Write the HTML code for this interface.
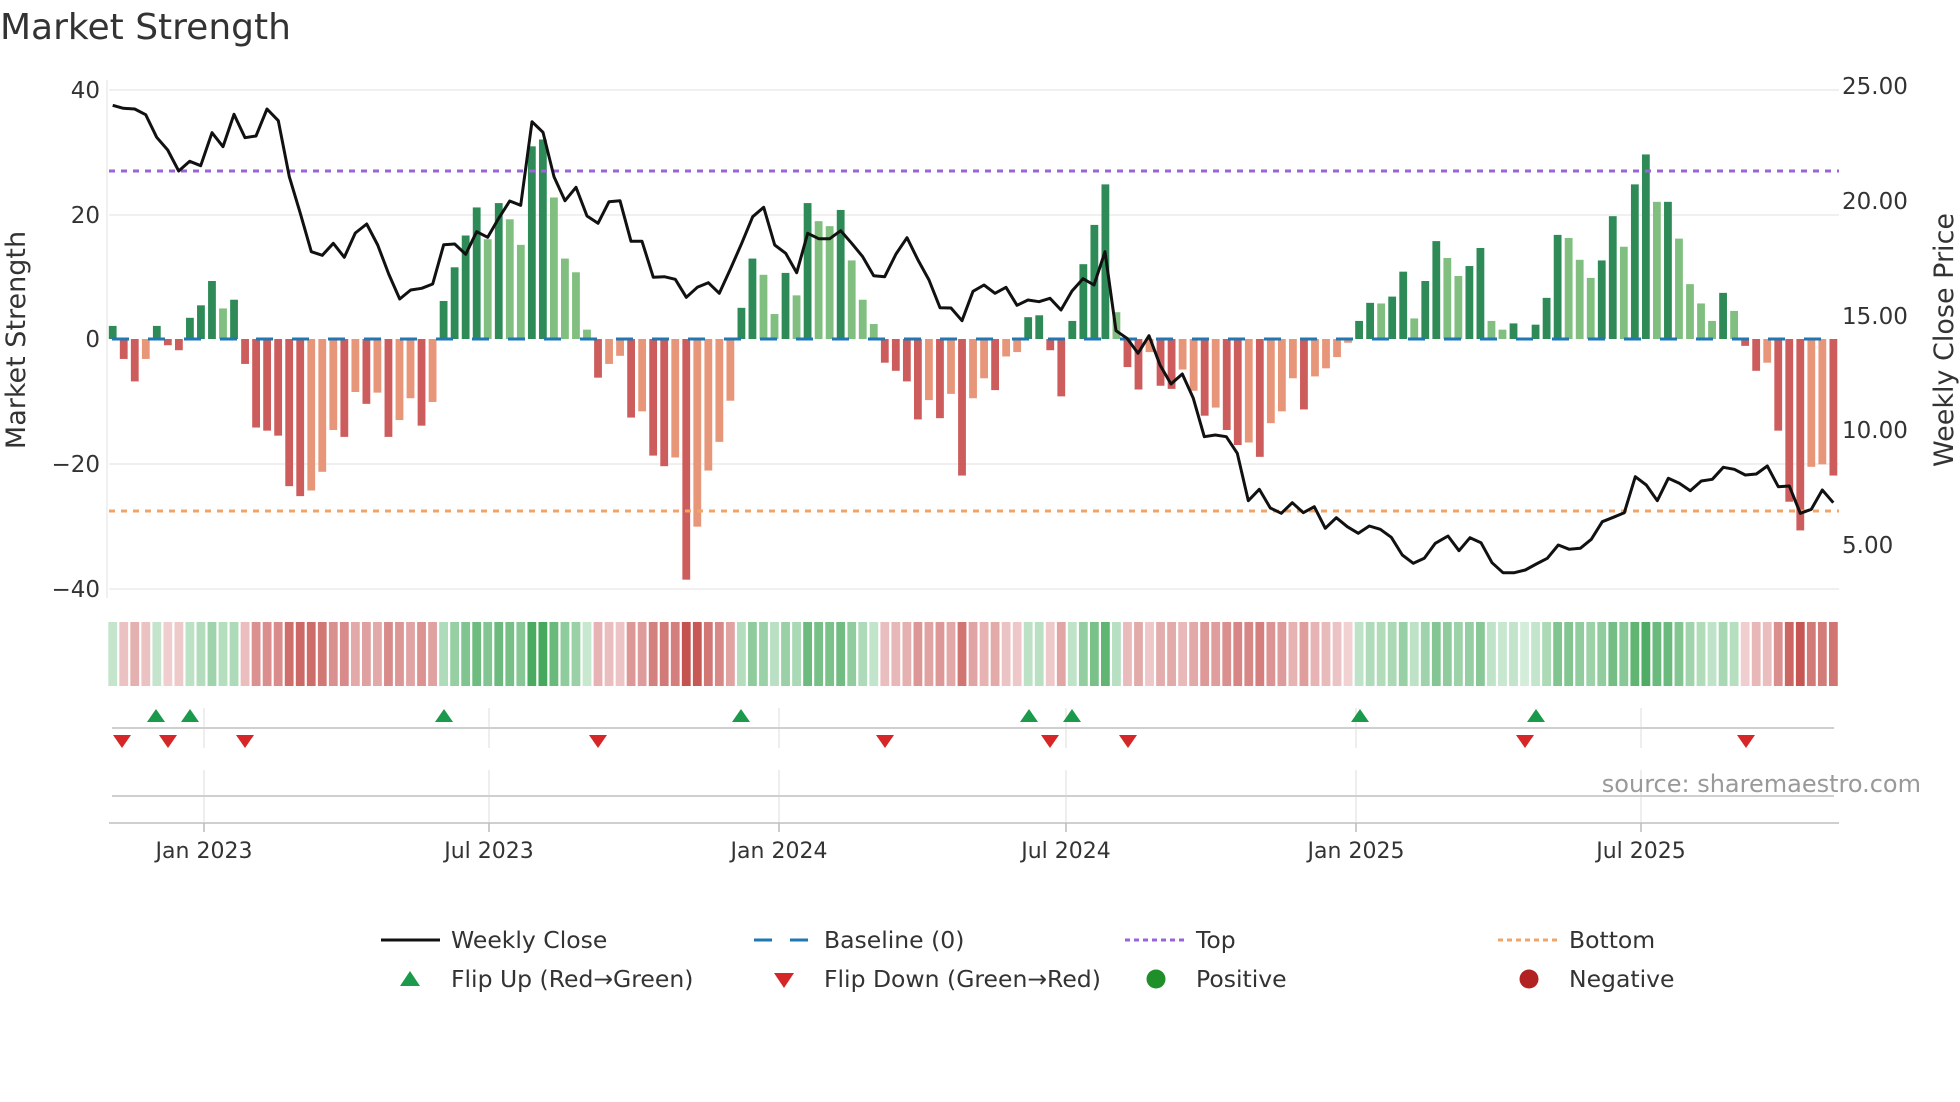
<!DOCTYPE html>
<html><head><meta charset="utf-8"><style>
html,body{margin:0;padding:0;background:#fff;}
svg{display:block;}
text{font-family:"DejaVu Sans","Liberation Sans",sans-serif;fill:#333;}
</style></head><body>
<svg id="s" width="1960" height="1102" viewBox="0 0 1960 1102" xmlns="http://www.w3.org/2000/svg">
<text x="0" y="39" font-size="36">Market Strength</text>
<g stroke="#ececec" stroke-width="1.5">
<line x1="109" y1="90" x2="1839" y2="90"/>
<line x1="109" y1="215" x2="1839" y2="215"/>
<line x1="109" y1="464" x2="1839" y2="464"/>
<line x1="109" y1="589" x2="1839" y2="589"/>
<line x1="107" y1="80" x2="107" y2="598"/>
</g>
<g font-size="23" text-anchor="end">
<text x="100" y="98">40</text>
<text x="100" y="223">20</text>
<text x="100" y="347">0</text>
<text x="100" y="472">−20</text>
<text x="100" y="597">−40</text>
</g>
<g font-size="23">
<text x="1842" y="94">25.00</text>
<text x="1842" y="209">20.00</text>
<text x="1842" y="324">15.00</text>
<text x="1842" y="438">10.00</text>
<text x="1842" y="553">5.00</text>
</g>
<text font-size="27" text-anchor="middle" transform="translate(25,340) rotate(-90)">Market Strength</text>
<text font-size="27" text-anchor="middle" transform="translate(1953,340) rotate(-90)">Weekly Close Price</text>
<g id="bars"></g>
<line x1="112" y1="339" x2="1839" y2="339" stroke="#1f77b4" stroke-width="3" stroke-dasharray="17 19"/>
<line x1="109" y1="171" x2="1839" y2="171" stroke="#9b63d8" stroke-width="3" stroke-dasharray="6 6"/>
<line x1="109" y1="511" x2="1839" y2="511" stroke="#f0a468" stroke-width="3" stroke-dasharray="6 6"/>
<polyline id="pl" fill="none" stroke="#111" stroke-width="3" stroke-linejoin="round" points=""/>
<g id="heat"></g>
<g stroke="#e8e8e8" stroke-width="1.5">
<line x1="204" y1="708" x2="204" y2="748"/><line x1="489" y1="708" x2="489" y2="748"/><line x1="779" y1="708" x2="779" y2="748"/><line x1="1066" y1="708" x2="1066" y2="748"/><line x1="1356" y1="708" x2="1356" y2="748"/><line x1="1641" y1="708" x2="1641" y2="748"/>
<line x1="204" y1="770" x2="204" y2="823"/><line x1="489" y1="770" x2="489" y2="823"/><line x1="779" y1="770" x2="779" y2="823"/><line x1="1066" y1="770" x2="1066" y2="823"/><line x1="1356" y1="770" x2="1356" y2="823"/><line x1="1641" y1="770" x2="1641" y2="823"/>
</g>
<line x1="112" y1="728" x2="1834" y2="728" stroke="#cfcfcf" stroke-width="2"/>
<line x1="112" y1="796" x2="1834" y2="796" stroke="#cfcfcf" stroke-width="2"/>
<line x1="109" y1="823" x2="1839" y2="823" stroke="#cfcfcf" stroke-width="2"/>
<g stroke="#bbb" stroke-width="1.5">
<line x1="204" y1="823" x2="204" y2="832"/><line x1="489" y1="823" x2="489" y2="832"/><line x1="779" y1="823" x2="779" y2="832"/><line x1="1066" y1="823" x2="1066" y2="832"/><line x1="1356" y1="823" x2="1356" y2="832"/><line x1="1641" y1="823" x2="1641" y2="832"/>
</g>
<g id="mk"></g>
<g font-size="22" text-anchor="middle">
<text x="204" y="858">Jan 2023</text>
<text x="489" y="858">Jul 2023</text>
<text x="779" y="858">Jan 2024</text>
<text x="1066" y="858">Jul 2024</text>
<text x="1356" y="858">Jan 2025</text>
<text x="1641" y="858">Jul 2025</text>
</g>
<text x="1921" y="792" font-size="24" text-anchor="end" style="fill:#999">source: sharemaestro.com</text>
<g font-size="23.5">
<line x1="381" y1="940" x2="440" y2="940" stroke="#111" stroke-width="3"/>
<text x="451" y="948">Weekly Close</text>
<line x1="754" y1="940" x2="772" y2="940" stroke="#1f77b4" stroke-width="3"/>
<line x1="790" y1="940" x2="808" y2="940" stroke="#1f77b4" stroke-width="3"/>
<text x="824" y="948">Baseline (0)</text>
<line x1="1125" y1="940" x2="1185" y2="940" stroke="#9b63d8" stroke-width="3" stroke-dasharray="5 4"/>
<text x="1196" y="948">Top</text>
<line x1="1498" y1="940" x2="1558" y2="940" stroke="#f0a468" stroke-width="3" stroke-dasharray="5 4"/>
<text x="1569" y="948">Bottom</text>
<polygon points="400,986 420,986 410,971" fill="#1a9a4a"/>
<text x="451" y="987">Flip Up (Red→Green)</text>
<polygon points="774,973 794,973 784,988" fill="#d62728"/>
<text x="824" y="987">Flip Down (Green→Red)</text>
<circle cx="1156" cy="979" r="9.5" fill="#1f8f2a"/>
<text x="1196" y="987">Positive</text>
<circle cx="1529" cy="979" r="9.5" fill="#b22222"/>
<text x="1569" y="987">Negative</text>
</g>
</svg>
<script>
(function(){
var NS="http://www.w3.org/2000/svg";
var raw="2.1,-3.2,-6.8,-3.2l,2.1,-1,-1.8,3.4,5.4,9.3,4.9l,6.3,-4,-14.2,-14.7,-15.5,-23.6,-25.2,-24.3l,-21.3l,-14.6l,-15.7,-8.5l,-10.4,-8.6l,-15.7,-13l,-9.5l,-13.9,-10.1l,6.1,11.5,16.6,21.1,16l,21.8,19.2l,15.1l,30.9,32,22.7l,12.9l,10.7l,1.5l,-6.2,-4l,-2.7l,-12.6,-11.6l,-18.7,-20.4,-19l,-38.6,-30.1l,-21.1l,-16.5l,-9.9l,5,12.9,10.3l,4l,10.6,7l,21.8,18.9l,18.1l,20.7,12.6l,6.3l,2.4l,-3.8,-5.1,-6.8,-12.9,-9.8l,-12.7,-8.8l,-21.9,-9.5l,-6.3l,-8.2,-2.8l,-2.1l,3.5,3.8,-1.8,-9.2,2.9,12,18.3,24.8,4.3l,-4.5,-8.1,-2.1l,-7.5,-8,-4.9l,-8.3l,-12.3,-11l,-14.6,-17,-16.6l,-18.9,-13.5l,-11.6l,-6.3l,-11.3,-6l,-4.7l,-2.9l,-0.6l,2.9,5.8,5.7l,6.8,10.8,3.3l,9.3,15.7,13l,10.1l,11.7,14.6,2.9l,1.5l,2.5,0,2.3,6.6,16.7,16.2l,12.7l,9.8l,12.6,19.7,14.8l,24.8,29.6,22l,22,16.1l,8.8l,5.7l,2.9l,7.4,4.5l,-1.1,-5.1,-3.8l,-14.7,-26.1,-30.7,-20.5l,-20.1l,-21.9".split(",");
var bars=document.getElementById("bars"),heat=document.getElementById("heat");
function lerp(a,b,t){return Math.round(a+(b-a)*t);}
for(var i=0;i<raw.length;i++){
 var s=raw[i],light=s.indexOf("l")>=0,v=parseFloat(s);
 var cx=112.7+11.03*i;
 if(v!==0){
  var h=Math.abs(v)*6.235,y=v>0?339-h:339;
  var col=v>0?(light?"#80bf7f":"#2e8b57"):(light?"#e8967a":"#cd5c5c");
  var r=document.createElementNS(NS,"rect");
  r.setAttribute("x",(cx-3.9).toFixed(2));r.setAttribute("y",y.toFixed(2));
  r.setAttribute("width","7.8");r.setAttribute("height",h.toFixed(2));r.setAttribute("fill",col);
  bars.appendChild(r);
 }
 var t=Math.pow(Math.min(1,Math.abs(v)/32),0.8);
 var c=v>=0?[lerp(212,70,t),lerp(237,168,t),lerp(218,92,t)]:[lerp(243,196,t),lerp(214,82,t),lerp(216,78,t)];
 var q=document.createElementNS(NS,"rect");
 q.setAttribute("x",(cx-4.4).toFixed(2));q.setAttribute("y","622");
 q.setAttribute("width","8.8");q.setAttribute("height","64");
 q.setAttribute("fill","rgb("+c.join(",")+")");
 heat.appendChild(q);
}
var segs=[[100,[38,76,70,85,104,87,137,104,170,172,203,210,236,273,269,244,302,257,336,158,369,200,402,103,435,173,468,168,501,87,535,122,568,290,601,400,634,515,667,526,700,490,733,532,766,459,800,432,833,495,866,582,899,657,932,630,965,625,998,612,1031,494,1064,492,1097,523,1130,455,1163,472,1196,415,1229,363,1262,376,1296,125,1329,157]],
[540,[42,290,75,362,108,322,141,408,174,430,207,365,240,362,273,484,306,484,340,592,373,590,406,598,439,652,472,622,505,608,538,640,571,568,605,490,638,410,671,382,704,495,737,520,770,578,803,460,836,476,869,476,902,452,935,490,968,530,1001,587,1034,590,1068,522,1101,473,1134,540,1167,600,1200,683,1233,684,1266,722,1299,634,1332,615,1365,640]],
[980,[78,622,111,676,144,660,177,665,210,655,243,690,276,633,309,596,342,615,375,515,408,752,441,775,474,820,507,767,540,855,573,912,607,882,640,955,673,1070,706,1065,739,1070,772,1120,805,1262,838,1228,871,1284,904,1300,937,1268,970,1298,1003,1280,1036,1345,1069,1313,1102,1340,1135,1360,1168,1338,1201,1348,1234,1372,1267,1425,1300,1450,1333,1435,1366,1390]],
[1420,[84,1368,117,1412,150,1373,183,1388,216,1448,249,1478,283,1478,316,1470,349,1452,382,1435,415,1395,448,1408,481,1405,514,1378,547,1325,580,1312,613,1298,646,1190,679,1215,712,1262,745,1195,778,1210,811,1232,844,1203,877,1198,910,1162,943,1168,976,1185,1009,1182,1042,1158,1075,1220,1108,1218,1141,1300,1174,1288,1207,1230,1240,1268]]];
var pts=[];
segs.forEach(function(sg){var o=sg[0],a=sg[1];for(var k=0;k<a.length;k+=2){pts.push((o+a[k]/3).toFixed(1)+","+(80+a[k+1]/3).toFixed(1));}});
document.getElementById("pl").setAttribute("points",pts.join(" "));
var mk=document.getElementById("mk");
[156,190,444,741,1029,1072,1360,1536].forEach(function(x){var p=document.createElementNS(NS,"polygon");p.setAttribute("points",(x-9)+",722 "+(x+9)+",722 "+x+",709");p.setAttribute("fill","#1a9a4a");mk.appendChild(p);});
[122,168,245,598,885,1050,1128,1525,1746].forEach(function(x){var p=document.createElementNS(NS,"polygon");p.setAttribute("points",(x-9)+",735 "+(x+9)+",735 "+x+",748");p.setAttribute("fill","#d62728");mk.appendChild(p);});
})();
</script>
</body></html>
